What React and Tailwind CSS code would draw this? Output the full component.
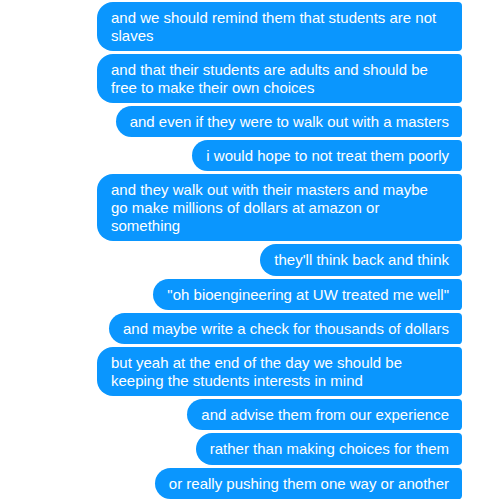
import React from "react";

const msgs = [
  ["and we should remind them that students are not", "slaves"],
  ["and that their students are adults and should be", "free to make their own choices"],
  ["and even if they were to walk out with a masters"],
  ["i would hope to not treat them poorly"],
  ["and they walk out with their masters and maybe", "go make millions of dollars at amazon or", "something"],
  ["they'll think back and think"],
  ["\"oh bioengineering at UW treated me well\""],
  ["and maybe write a check for thousands of dollars"],
  ["but yeah at the end of the day we should be", "keeping the students interests in mind"],
  ["and advise them from our experience"],
  ["rather than making choices for them"],
  ["or really pushing them one way or another"],
];

export default function App() {
  return (
    <div
      className="w-[480px] h-[499px] overflow-hidden bg-white flex flex-col items-end pr-[18px] pt-[1.5px] gap-[3px]"
      style={{ fontFamily: '"Liberation Sans", Arial, sans-serif' }}
    >
      {msgs.map((lines, i) => (
        <div
          key={i}
          className={
            "bg-[#0a96fe] text-white text-[15px] leading-[18px] pl-[14px] pr-[13px] pt-[7px] pb-[6.2px] rounded-l-[16px] rounded-r-[4px] whitespace-nowrap shrink-0 " +
            (lines.length > 1 ? "w-[365px]" : "")
          }
        >
          {lines.map((l, j) => (
            <div key={j}>{l}</div>
          ))}
        </div>
      ))}
    </div>
  );
}
